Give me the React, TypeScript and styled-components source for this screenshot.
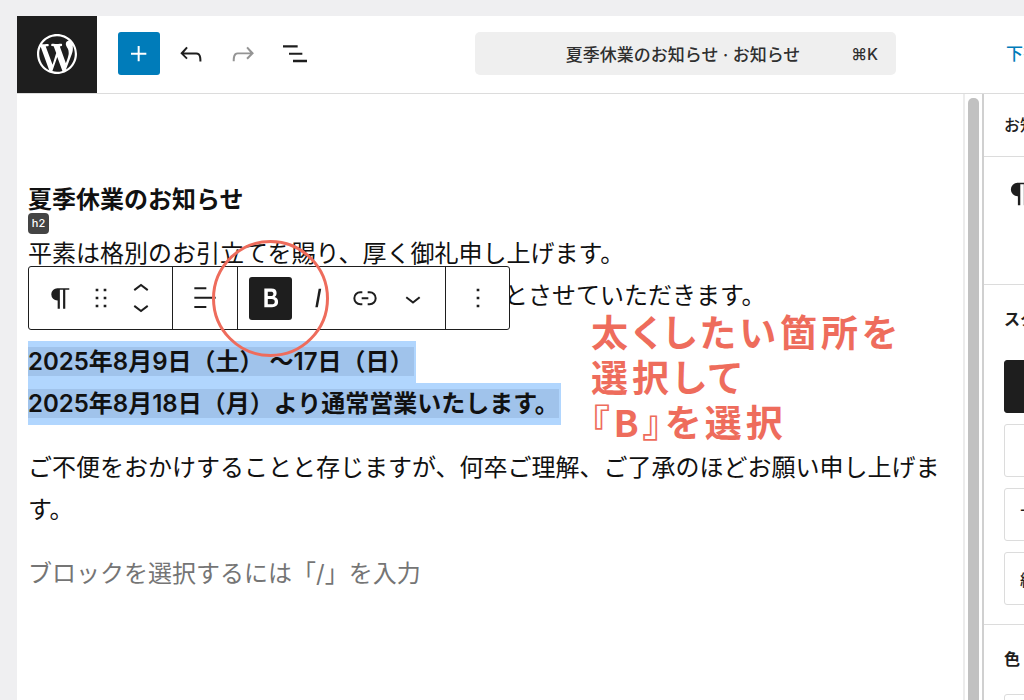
import React from "react";
import styled, { createGlobalStyle } from "styled-components";

const GlobalStyle = createGlobalStyle`
  *, *::before, *::after { box-sizing: border-box; }
  body {
    margin: 0;
    background: #efeff1;
    color: #1e1e1e;
    font-family: Inter, "Noto Sans CJK JP", sans-serif;
  }
  button { font: inherit; color: inherit; cursor: pointer; }
`;

const Shell = styled.div`
  height: 100vh;
  padding: 16px 0 0 17px;
  display: flex;
  flex-direction: column;
  overflow: hidden;
`;

const TopBar = styled.header`
  flex: none;
  display: flex;
  align-items: center;
  height: 78px;
  background: #fff;
  border-bottom: 1px solid #dcdcdc;
  overflow: hidden;
`;

const HomeLink = styled.a`
  flex: none;
  align-self: stretch;
  width: 80px;
  padding-bottom: 2px;
  display: grid;
  place-items: center;
  background: #1e1e1e;
  color: #fff;
`;

const Tools = styled.div`
  flex: none;
  display: flex;
  align-items: center;
  gap: 10px;
  margin-left: 21px;
  padding-bottom: 2px;
`;

const ToolButton = styled.button<{ $primary?: boolean; $muted?: boolean }>`
  width: 42px;
  height: 43px;
  padding: 0;
  border: 0;
  border-radius: 3px;
  display: grid;
  place-items: center;
  background: ${(p) => (p.$primary ? "#007cba" : "transparent")};
  color: ${(p) => (p.$primary ? "#fff" : p.$muted ? "#949494" : "#1e1e1e")};
`;

const CommandSlot = styled.div`
  flex: 0 1 421px;
  margin-left: auto;
  padding-bottom: 2px;
`;

const CommandButton = styled.button`
  width: 100%;
  height: 43px;
  padding: 0 18px;
  border: 0;
  border-radius: 5px;
  display: flex;
  align-items: center;
  background: #efefef;
  color: #2f2f2f;
  font-size: 17px;
  font-weight: 500;
  white-space: nowrap;
`;

const CommandTitle = styled.span`
  flex: 1;
  padding-left: 22px;
`;

const Shortcut = styled.kbd`
  font: inherit;
  font-size: 16px;
`;

const DraftSlot = styled.div`
  flex: 0 0 18px;
  margin-left: 110px;
  padding-bottom: 4px;
  overflow: hidden;
  white-space: nowrap;
`;

const DraftButton = styled.button`
  padding: 0;
  border: 0;
  background: none;
  color: #007cba;
  font-size: 17px;
  font-weight: 500;
`;

const Body = styled.div`
  flex: 1;
  min-height: 0;
  display: flex;
  background: #fff;
`;

const Canvas = styled.main`
  position: relative;
  flex: 1;
  min-width: 0;
  padding: 85px 12px 0 11px;
  color: #111;
  font-size: 24px;
  line-height: 42px;
`;

const Heading = styled.h2`
  margin: 0;
  font-size: 24px;
  font-weight: 700;
  line-height: 42px;
`;

const BlockTag = styled.span`
  position: absolute;
  left: 11px;
  top: 119px;
  width: 21px;
  height: 21px;
  border-radius: 4px;
  background: #444;
  color: #fff;
  font-size: 11px;
  font-weight: 500;
  line-height: 21px;
  text-align: center;
`;

const Paragraph = styled.p<{ $gap?: number; $muted?: boolean }>`
  margin: ${(p) => p.$gap ?? 22}px 0 0;
  color: ${(p) => (p.$muted ? "#757575" : "inherit")};
`;

const Continuation = styled.span`
  display: block;
  padding-left: 476px;
`;

const SelectedLine = styled.span`
  display: block;
  width: fit-content;
  padding-right: 2px;
  background: #b1d6fe;
  white-space: nowrap;
`;

const SelectedText = styled.strong`
  font-weight: 600;
  background: #a0c3eb;
`;

const BlockToolbar = styled.div`
  position: absolute;
  left: 11px;
  top: 172px;
  height: 64px;
  display: flex;
  border: 1px solid #1e1e1e;
  border-radius: 3px;
  background: #fff;
`;

const ToolbarGroup = styled.div<{ $pad: string }>`
  display: flex;
  align-items: center;
  padding: ${(p) => p.$pad};
  & + & { border-left: 1px solid #1e1e1e; }
`;

const BlockButton = styled.button<{ $width?: number; $active?: boolean }>`
  width: ${(p) => p.$width ?? 43}px;
  height: 43px;
  padding: 0;
  border: 0;
  border-radius: 3px;
  display: grid;
  place-items: center;
  background: ${(p) => (p.$active ? "#1e1e1e" : "transparent")};
  color: ${(p) => (p.$active ? "#fff" : "#1e1e1e")};
`;

const Ring = styled.div`
  position: absolute;
  left: 195px;
  top: 146px;
  width: 117px;
  height: 117px;
  border: 3px solid #ee6c5c;
  border-radius: 50%;
  pointer-events: none;
`;

const Callout = styled.div`
  position: absolute;
  left: 574px;
  top: 215px;
  color: #ee6c5c;
  font-family: "Noto Sans CJK JP", sans-serif;
  font-size: 37px;
  font-weight: 700;
  line-height: 45px;
  letter-spacing: 4px;
  font-feature-settings: "palt";
  white-space: nowrap;
`;

const ScrollTrack = styled.div`
  flex: 0 0 19px;
  padding: 4px 3px 0;
  border-left: 2px solid #ececec;
`;

const ScrollThumb = styled.div`
  width: 11px;
  height: 100%;
  border-radius: 5px 5px 0 0;
  background: #c1c1c1;
`;

const Sidebar = styled.aside`
  flex: 0 0 42px;
  border-left: 2px solid #d0d0d0;
  overflow: hidden;
  font-size: 16px;
  font-weight: 500;
  white-space: nowrap;
`;

const Panel = styled.section<{ $height: number }>`
  width: 320px;
  height: ${(p) => p.$height}px;
  padding: 0 20px;
  border-bottom: 1px solid #dcdcdc;
`;

const PanelTab = styled.button`
  height: 60px;
  padding: 0;
  border: 0;
  background: none;
`;

const PanelIcon = styled.div`
  padding-top: 20px;
`;

const PanelTitle = styled.h3<{ $tight?: boolean }>`
  margin: 0;
  font-size: 16px;
  font-weight: 700;
  line-height: 24px;
  padding: 22px 0 ${(p) => (p.$tight ? 23 : 29)}px;
`;

const StyleList = styled.div`
  display: grid;
  gap: 11px;
`;

const StyleButton = styled.button<{ $active?: boolean }>`
  width: 100%;
  height: 53px;
  padding: 0 15px;
  border: 1px solid ${(p) => (p.$active ? "#1e1e1e" : "#dcdcdc")};
  border-radius: 3px;
  background: ${(p) => (p.$active ? "#1e1e1e" : "#fff")};
  text-align: left;
`;

type IconProps = { size?: number; children: React.ReactNode };

const Icon = ({ size = 32, children }: IconProps) => (
  <svg width={size} height={size} viewBox="0 0 24 24" fill="currentColor" aria-hidden="true">
    {children}
  </svg>
);

const PilcrowIcon = ({ size }: { size?: number }) => (
  <Icon size={size}>
    <path d="M9.8 13.500V20h1.700V5.200h2.500V20h1.700V5.200h3.100V4H9.600a4.750 4.750 0 0 0 0 9.500z" />
  </Icon>
);

const WordPressLogo = () => (
  <svg width="48" height="48" viewBox="-2 -2 24 24" fill="currentColor" aria-hidden="true">
    <path d="M20 10c0-5.51-4.49-10-10-10C4.48 0 0 4.49 0 10c0 5.52 4.48 10 10 10 5.51 0 10-4.48 10-10zM7.78 15.37L4.37 6.22c.55-.02 1.17-.08 1.17-.08.5-.06.44-1.13-.06-1.11 0 0-1.45.11-2.37.11-.18 0-.37 0-.58-.01C4.12 2.69 6.87 1.11 10 1.11c2.33 0 4.45.87 6.05 2.34-.68-.11-1.65.39-1.65 1.58 0 .74.45 1.36.9 2.1.35.61.55 1.36.55 2.46 0 1.49-1.4 5-1.4 5l-3.03-8.37c.54-.02.82-.17.82-.17.5-.05.44-1.25-.06-1.22 0 0-1.44.12-2.38.12-.87 0-2.33-.12-2.33-.12-.5-.03-.56 1.2-.06 1.22l.92.08 1.26 3.41zM17.41 10c.24-.64.74-1.87.43-4.25.7 1.29 1.05 2.71 1.05 4.25 0 3.29-1.73 6.24-4.4 7.78.97-2.59 1.94-5.2 2.92-7.78zM6.1 18.09C3.12 16.65 1.11 13.53 1.11 10c0-1.3.23-2.48.72-3.59C3.25 10.3 4.67 14.2 6.1 18.09zm4.03-6.63l2.58 6.98c-.86.29-1.76.45-2.71.45-.79 0-1.57-.11-2.29-.33.81-2.38 1.62-4.74 2.42-7.1z" />
  </svg>
);

export default function App() {
  return (
    <>
      <GlobalStyle />
      <Shell>
        <TopBar>
          <HomeLink href="#" aria-label="WordPress">
            <WordPressLogo />
          </HomeLink>
          <Tools>
            <ToolButton $primary aria-label="ブロックを追加">
              <Icon><path d="M11 12.500V17.500H12.500V12.500H17.500V11H12.500V6H11V11H6V12.500H11Z" /></Icon>
            </ToolButton>
            <ToolButton aria-label="元に戻す">
              <Icon><path d="M18.3 11.7c-.6-.6-1.4-.9-2.3-.9H6.7l2.9-3.3-1.1-1-4.5 5L8.5 16l1-1-2.7-2.7H16c.5 0 .9.2 1.3.5 1 1 1 3.4 1 4.5v.3h1.5v-.2c0-1.5 0-4.3-1.5-5.7z" /></Icon>
            </ToolButton>
            <ToolButton $muted aria-label="やり直す">
              <Icon><path d="M15.6 6.5l-1.1 1 2.9 3.3H8c-.9 0-1.7.3-2.3.9-1.4 1.5-1.4 4.2-1.4 5.6v.2h1.5v-.3c0-1.1 0-3.5 1-4.5.3-.3.7-.5 1.3-.5h9.2L14.5 15l1.1 1.1 4.6-4.6-4.6-5z" /></Icon>
            </ToolButton>
            <ToolButton aria-label="ドキュメント概観">
              <Icon><path d="M3 5.500h11v1.700H3V5.500Zm4.500 5.500h10v1.500h-10V11ZM21 16.400H10.500v1.700H21v-1.700Z" /></Icon>
            </ToolButton>
          </Tools>
          <CommandSlot>
            <CommandButton>
              <CommandTitle>夏季休業のお知らせ · お知らせ</CommandTitle>
              <Shortcut>⌘K</Shortcut>
            </CommandButton>
          </CommandSlot>
          <DraftSlot>
            <DraftButton>下書き</DraftButton>
          </DraftSlot>
        </TopBar>

        <Body>
          <Canvas>
            <Heading>夏季休業のお知らせ</Heading>
            <BlockTag>h2</BlockTag>
            <Paragraph $gap={12}>
              平素は格別のお引立てを賜り、厚く御礼申し上げます。
              <Continuation>とさせていただきます。</Continuation>
            </Paragraph>
            <Paragraph $gap={24}>
              <SelectedLine>
                <SelectedText>2025年8月9日（土） 〜17日（日）</SelectedText>
              </SelectedLine>
              <SelectedLine>
                <SelectedText>2025年8月18日（月）より通常営業いたします。</SelectedText>
              </SelectedLine>
            </Paragraph>
            <Paragraph>
              ご不便をおかけすることと存じますが、何卒ご理解、ご了承のほどお願い申し上げます。
            </Paragraph>
            <Paragraph $muted>ブロックを選択するには「/」を入力</Paragraph>

            <BlockToolbar role="toolbar" aria-label="ブロックツール">
              <ToolbarGroup $pad="0 10px">
                <BlockButton aria-label="段落">
                  <PilcrowIcon size={31} />
                </BlockButton>
                <BlockButton $width={38} aria-label="ドラッグ">
                  <Icon><path d="M8 7h2V5H8v2zm0 6h2v-2H8v2zm0 6h2v-2H8v2zm6-14v2h2V5h-2zm0 8h2v-2h-2v2zm0 6h2v-2h-2v2z" /></Icon>
                </BlockButton>
                <BlockButton $width={42} aria-label="上下に移動">
                  <Icon>
                    <path d="M6.500 5.500 12 1.300l5.500 4.200-.9 1.200L12 3.200 7.400 6.700z" />
                    <path d="M6.500 18.500 12 22.700l5.500-4.200-.9-1.200L12 20.800l-4.600-3.500z" />
                  </Icon>
                </BlockButton>
              </ToolbarGroup>
              <ToolbarGroup $pad="0 11px 0 10px">
                <BlockButton aria-label="配置">
                  <Icon><path d="M13 5.500H4V4h9v1.500zm7 7H4V11h16v1.500zm-7 7H4V18h9v1.500z" /></Icon>
                </BlockButton>
              </ToolbarGroup>
              <ToolbarGroup $pad="0 6px 0 11px">
                <BlockButton $active aria-label="太字">
                  <Icon><path d="M14.7 11.3c1-.6 1.500-1.600 1.500-3 0-2.300-1.300-3.400-4-3.400H7v14h5.800c1.400 0 2.500-.3 3.300-1 .8-.7 1.200-1.700 1.200-2.900.1-1.900-.8-3.100-2.600-3.700zm-5.100-4h2.300c.6 0 1.100.1 1.400.4.3.3.500.7.5 1.200s-.2 1-.5 1.200c-.3.3-.8.4-1.400.4H9.600V7.300zm4.600 9c-.4.3-1 .4-1.700.4H9.600v-3.900h2.900c.7 0 1.300.2 1.700.5.4.3.6.8.6 1.500s-.2 1.200-.6 1.500z" /></Icon>
                </BlockButton>
                <BlockButton $width={52} aria-label="斜体">
                  <Icon><path d="M12.500 5 10 19h1.900l2.500-14z" /></Icon>
                </BlockButton>
                <BlockButton $width={42} aria-label="リンク">
                  <Icon><path d="M10 17.389H8.444A5.194 5.194 0 1 1 8.444 7H10v1.500H8.444a3.694 3.694 0 0 0 0 7.389H10v1.500ZM14 7h1.556a5.194 5.194 0 0 1 0 10.390H14v-1.500h1.556a3.694 3.694 0 0 0 0-7.390H14V7Zm-4.500 6h5v-1.500h-5V13Z" /></Icon>
                </BlockButton>
                <BlockButton $width={53} aria-label="さらに表示">
                  <Icon><path d="M17.500 12 12 16.400 6.500 12l.9-1.200L12 14.400l4.500-3.600 1 1.200z" /></Icon>
                </BlockButton>
              </ToolbarGroup>
              <ToolbarGroup $pad="0 10px">
                <BlockButton aria-label="オプション">
                  <Icon><path d="M13 19h-2v-2h2v2zm0-6h-2v-2h2v2zm0-6h-2V5h2v2z" /></Icon>
                </BlockButton>
              </ToolbarGroup>
            </BlockToolbar>

            <Ring />
            <Callout>
              太くしたい箇所を
              <br />
              選択して
              <br />
              『B』を選択
            </Callout>
          </Canvas>

          <ScrollTrack>
            <ScrollThumb />
          </ScrollTrack>

          <Sidebar>
            <Panel $height={63}>
              <PanelTab>お知らせ</PanelTab>
            </Panel>
            <Panel $height={128}>
              <PanelIcon>
                <PilcrowIcon size={34} />
              </PanelIcon>
            </Panel>
            <Panel $height={340}>
              <PanelTitle>スタイル</PanelTitle>
              <StyleList>
                <StyleButton $active aria-label="デフォルト" />
                <StyleButton aria-label="枠線" />
                <StyleButton>下線</StyleButton>
                <StyleButton>線</StyleButton>
              </StyleList>
            </Panel>
            <Panel $height={140}>
              <PanelTitle $tight>色</PanelTitle>
              <StyleButton aria-label="テキスト" />
            </Panel>
          </Sidebar>
        </Body>
      </Shell>
    </>
  );
}
